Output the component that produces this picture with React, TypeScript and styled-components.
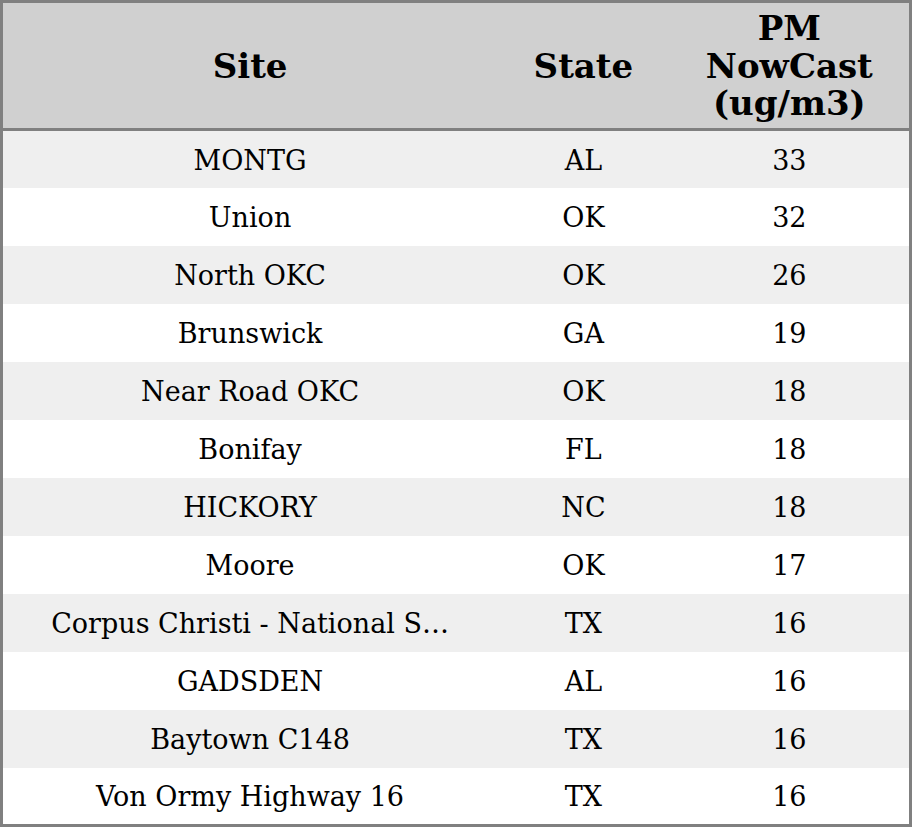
import React from "react";
import styled, { createGlobalStyle } from "styled-components";

const Global = createGlobalStyle`
  html, body { margin: 0; padding: 0; background: #fff; }
  body { font-family: "DejaVu Serif", serif; }
`;

const Table = styled.table`
  width: 912px;
  height: 827px;
  border-collapse: collapse;
  table-layout: fixed;
  border: 3px solid #808080;
  font-family: "DejaVu Serif", serif;
  color: #000;
`;

const HeadRow = styled.tr`
  background: #d0d0d0;
  height: 128px;
  border-bottom: 3px solid #808080;
`;

const Th = styled.th`
  font-weight: bold;
  font-size: 34px;
  line-height: 37.5px;
  text-align: center;
  vertical-align: middle;
  padding: 2px 8px 0;
`;

const Row = styled.tr<{ $odd: boolean }>`
  background: ${(p) => (p.$odd ? "#efefef" : "#ffffff")};
  height: 57.75px;
`;

const Td = styled.td`
  font-size: 27px;
  text-align: center;
  vertical-align: middle;
  padding: 2px 8px 0;
  white-space: nowrap;
  overflow: hidden;
  text-overflow: ellipsis;
`;

const SiteTd = styled(Td)`
  padding: 2px 40px 0;
`;

const rows: [string, string, number][] = [
  ["MONTG", "AL", 33],
  ["Union", "OK", 32],
  ["North OKC", "OK", 26],
  ["Brunswick", "GA", 19],
  ["Near Road OKC", "OK", 18],
  ["Bonifay", "FL", 18],
  ["HICKORY", "NC", 18],
  ["Moore", "OK", 17],
  ["Corpus Christi - National S…", "TX", 16],
  ["GADSDEN", "AL", 16],
  ["Baytown C148", "TX", 16],
  ["Von Ormy Highway 16", "TX", 16],
];

export default function App() {
  return (
    <>
      <Global />
      <Table>
        <colgroup>
          <col style={{ width: 494 }} />
          <col style={{ width: 172 }} />
          <col style={{ width: 240 }} />
        </colgroup>
        <thead>
          <HeadRow>
            <Th>Site</Th>
            <Th>State</Th>
            <Th>
              PM
              <br />
              NowCast
              <br />
              (ug/m3)
            </Th>
          </HeadRow>
        </thead>
        <tbody>
          {rows.map(([site, st, v], i) => (
            <Row key={i} $odd={i % 2 === 0}>
              <SiteTd>{site}</SiteTd>
              <Td>{st}</Td>
              <Td>{v}</Td>
            </Row>
          ))}
        </tbody>
      </Table>
    </>
  );
}
